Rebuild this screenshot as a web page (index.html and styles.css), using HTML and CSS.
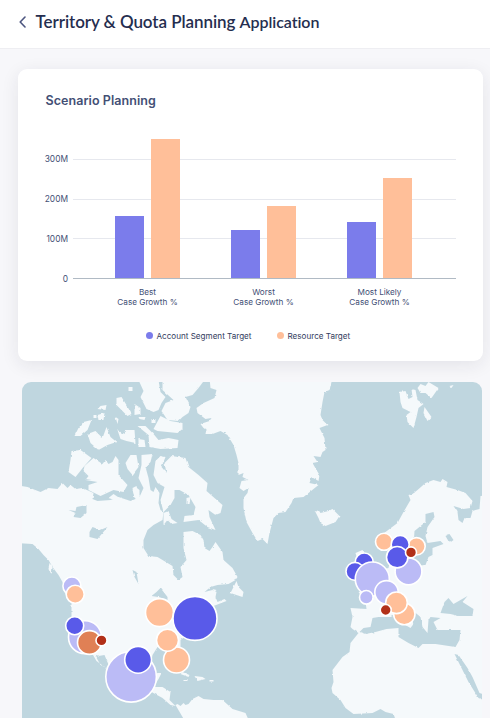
FILE: index.html
```html
<!DOCTYPE html>
<html lang="en">
<head>
    <meta charset="UTF-8">
    <meta name="viewport" content="width=device-width, initial-scale=1.0">
    <title>Territory &amp; Quota Planning Application</title>
    <link rel="stylesheet" href="styles.css">
</head>
<body>
    <header class="topbar">
        <svg class="back" viewBox="0 0 7 12"><path d="M6 1 1.2 6 6 11"/></svg>
        <h1>Territory &amp; Quota Planning <span>Application</span></h1>
    </header>
    <main>
        <section class="card">
            <h2>Scenario Planning</h2>
            <div class="chart">
                <div class="y-axis">
                    <span>300M</span>
                    <span>200M</span>
                    <span>100M</span>
                    <span>0</span>
                </div>
                <div class="plot">
                    <div class="group">
                        <div class="bar account" style="height: 62.5px"></div>
                        <div class="bar resource" style="height: 139.5px"></div>
                    </div>
                    <div class="group">
                        <div class="bar account" style="height: 48.5px"></div>
                        <div class="bar resource" style="height: 72.5px"></div>
                    </div>
                    <div class="group">
                        <div class="bar account" style="height: 56px"></div>
                        <div class="bar resource" style="height: 100px"></div>
                    </div>
                </div>
                <div class="x-axis">
                    <span>Best<br>Case Growth %</span>
                    <span>Worst<br>Case Growth %</span>
                    <span>Most Likely<br>Case Growth %</span>
                </div>
            </div>
            <div class="legend">
                <span><i class="dot account"></i>Account Segment Target</span>
                <span><i class="dot resource"></i>Resource Target</span>
            </div>
        </section>
        <svg class="map" viewBox="21.5 382 460.5 336">
            <defs>
                <filter id="coast" filterUnits="userSpaceOnUse" x="10" y="370" width="490" height="360">
                    <feTurbulence type="fractalNoise" baseFrequency="0.22" numOctaves="2" seed="4"/>
                    <feDisplacementMap in="SourceGraphic" scale="2.2" xChannelSelector="R" yChannelSelector="G"/>
                </filter>
            </defs>
            <g filter="url(#coast)">
                <g class="land">
                    <!-- north america -->
                    <path d="M15 485 27 487 40 492 48 488 57 489 62 483 67 488 70 485 75 489 82 488 93 493 92 499 97 501 110 500 118 497 130 501 135 499 132 490 135 487 139 490 139 497 143 488 138 478 141 465 141 455 152 454 150 462 145 467 148 478 150 490 153 492 155 487 159 493 158 503 160 510 163 512 162 520 153 525 147 530 143 540 143 548 148 556 157 557 167 563 172 566 173 575 178 580 182 577 180 567 186 560 183 548 183 532 192 531 200 535 203 540 204 548 209 551 212 547 215 542 222 552 223 560 232 568 237 577 235 580 228 584 217 585 210 587 204 592 212 590 216 592 215 597 217 602 224 599 226 601 213 606 204 616 196 628 184 637 180 640 180 650 184 664 180 668 172 652 157 647 152 655 150 665 150 677 157 673 161 673 158 679 153 687 162 687 170 692 169 700 175 706 170 705 162 698 151 692 140 695 122 693 108 680 107 673 100 657 95 656 100 665 104 667 96 661 92 654 82 650 70 633 71 617 71 603 65 593 62 582 58 575 52 567 48 560 43 555 38 549 32 544 15 543Z"/>
                    <path d="M175 705 177 704 180 706 183 703 185 705 188 704 192 699 198 696 203 699 213 700 222 700 232 709 245 713 249 722 185 722Z"/>
                    <path d="M49 563 52 567 51 575 48 568Z M236 581 238 587 243 592 242 597 236 595 230 593Z M212 589 216 590 214 592Z M194 676 202 677 205 679 197 681Z M182 672 189 675 188 677 180 674Z M209 680h4v1.500h-4Z M183 680h4v1h-4Z"/>
                    <!-- arctic islands -->
                    <path d="M71 451 80 450 91 458 83 467 75 477 68 472 70 460Z"/>
                    <path d="M93 458 102 464 105 460 108 464 112 462 115 456 118 460 118 475 127 485 123 492 113 490 100 496 88 490 88 485 97 482 85 480 88 476 83 471 84 466Z"/>
                    <path d="M125 463 130 455 136 455 138 467 132 475 127 469Z M108 498 113 494 119 498 117 501Z M132 488 136 486 138 494 134 498Z"/>
                    <path d="M87 434 95 431 102 438 106 427 110 437 116 442 107 445 98 450 90 443Z M74 436 78 428 83 422 91 420 87 430 80 436Z"/>
                    <path d="M97 409 100 406 106 405 105 410Z M97 415 104 413 103 420 98 420Z M93 415h3v3h-3Z M116 398 121 397 126 405 131 414 127 416 116 405Z M134 404 140 408 140 414 134 415Z M128 387h4v4h-4Z M115 417 118 419 117 424Z"/>
                    <path d="M117 430 123 434 125 430 134 430 135 443 126 441 120 439Z M138 439 144 440 145 447 138 447Z M138 417 145 417 144 420 139 419Z M151 419h4v4h-4Z"/>
                    <path d="M138 380 158 380 160 392 165 397 161 403 158 410 153 412 146 409 140 397 143 391Z"/>
                    <path d="M162 380 204 380 198 388 192 395 185 397 190 407 188 413 182 417 178 421 167 420 161 411 165 403 173 400 162 390Z"/>
                    <path d="M153 429 160 416 170 421 182 423 182 429 177 433 157 431Z M137 426 145 426 153 434 158 440 168 438 178 440 177 448 160 449 149 447 148 435Z"/>
                    <path d="M153 475 155 461 160 456 165 457 161 467 166 473 164 463 171 456 185 458 188 467 198 475 207 483 206 491 222 505 220 513 215 515 208 510 209 517 215 530 207 527 198 520 183 522 184 516 193 515 195 507 188 495 179 490 174 490 174 498 170 505 163 512 160 500 164 487 157 483Z"/>
                    <path d="M186 498 190 497 189 504 186 504Z M163 513 168 511 171 519 177 523 171 524 167 520 163 525Z"/>
                    <!-- greenland and iceland -->
                    <path d="M209 378 210 388 216 390 214 398 203 403 196 408 197 413 205 419 211 418 209 421 200 424 203 428 206 429 205 434 212 434 220 431 227 435 233 445 236 455 238 463 238 475 243 473 242 477 248 480 241 481 239 488 243 491 248 488 247 493 243 498 243 508 246 522 252 533 257 541 262 539 267 544 269 533 273 518 278 513 285 512 291 503 293 498 303 497 318 485 309 483 311 477 318 481 319 475 316 470 312 463 317 462 313 456 320 457 322 452 325 450 324 438 319 428 327 425 322 420 320 415 322 402 324 392 329 390 332 378Z"/>
                    <path d="M315 512 318 510 320 513 328 511 332 509 339 516 335 522 325 526 320 523 318 518Z"/>
                    <!-- svalbard -->
                    <path d="M399 392 405 391 408 399 412 397 411 389 415 390 417 400 423 404 418 408 416 417 413 428 407 422 406 415 410 412 402 408 400 402Z M424 407 431 417 427 421 423 413Z M417 388 420 384 425 386 428 382 438 388 431 398 425 393 420 393Z M449 386 453 385 451 388Z"/>
                    <!-- europe and africa -->
                    <path d="M381 535 397 523 403 512 410 500 408 495 412 494 417 490 425 483 433 480 440 482 442 479 447 482 446 487 457 490 465 493 472 501 470 508 463 509 453 506 457 512 458 520 462 523 464 518 470 518 472 511 475 510 479 509 480 496 490 495 490 725 397 725 393 714 385 712 380 709 372 713 353 714 345 708 340 700 332 693 331 688 333 682 332 670 342 657 349 652 350 643 358 633 352 629 350 627 352 617 350 608 366 609 365 602 358 592 374 590 380 570 388 568 391 555 394 549 380 548Z"/>
                    <path d="M355 553 362 550 366 557 374 568 377 577 365 581 366 565 359 567Z M347 567 355 563 357 577 348 578Z"/>
                </g>
                <g class="water">
                    <path d="M68 510 75 511 76 507 86 505 86 513 80 518 73 517 75 513Z M89 532 92 527 100 530 107 527 102 533 97 539 89 537Z M132 570 136 572 138 584 134 577Z M151 596 156 592 160 588 167 597 167 600 158 597Z M98 656 104 655 109 667 106 670Z"/>
                    <path d="M359 632 363 628 370 627 372 618 378 617 390 617 397 614 403 624 410 628 413 624 410 615 414 612 420 617 422 627 427 633 428 620 430 617 440 618 433 622 437 630 448 630 460 630 459 640 455 647 435 644 422 644 418 648 408 643 398 637 398 628 386 629 375 632 365 634Z"/>
                    <path d="M440 613 444 602 448 598 453 604 467 596 462 602 473 609 472 616 458 616 450 614Z M454 654 458 655 467 668 472 677 479 693 485 695 485 701 478 698 468 682 462 670Z"/>
                    <path d="M425 514 433 512 434 517 427 527 425 536 427 543 440 541 443 544 432 548 432 555 428 557 425 565 405 567 392 562 394 552 408 554 413 546 414 531 425 522Z M445 536 449 534 453 540 449 543Z"/>
                </g>
            </g>
            <g class="bubbles">
                <circle class="lavender" cx="71.400" cy="586" r="9"/>
                <circle class="peach" cx="74.700" cy="594.200" r="9"/>
                <circle class="lavender" cx="84.500" cy="637.200" r="16.500"/>
                <circle class="indigo" cx="74.200" cy="625.800" r="9"/>
                <circle class="orange" cx="88.900" cy="642.500" r="11.900"/>
                <circle class="red" cx="101" cy="640.400" r="5.500"/>
                <circle class="lavender" cx="130.600" cy="676.800" r="25.300"/>
                <circle class="indigo" cx="137.600" cy="659.800" r="13.400"/>
                <circle class="peach" cx="159" cy="612.600" r="14"/>
                <circle class="indigo" cx="194.500" cy="618.400" r="22"/>
                <circle class="peach" cx="176" cy="660" r="13"/>
                <circle class="peach" cx="167" cy="640.200" r="11"/>
                <circle class="peach" cx="383.500" cy="541.800" r="8.500"/>
                <circle class="peach" cx="416" cy="546.300" r="8.700"/>
                <circle class="indigo" cx="399.700" cy="544.500" r="9"/>
                <circle class="lavender" cx="408" cy="571.400" r="13.400"/>
                <circle class="indigo" cx="396.700" cy="557.200" r="10.700"/>
                <circle class="red" cx="410.500" cy="552.400" r="5.500"/>
                <circle class="indigo" cx="363.700" cy="562" r="9"/>
                <circle class="indigo" cx="354.500" cy="571.400" r="9"/>
                <circle class="lavender" cx="371.800" cy="579" r="17"/>
                <circle class="lavender" cx="365.800" cy="597.300" r="6.800"/>
                <circle class="lavender" cx="386" cy="592.300" r="11.700"/>
                <circle class="peach" cx="403.800" cy="614" r="10.700"/>
                <circle class="peach" cx="396" cy="602.800" r="10.800"/>
                <circle class="red" cx="385.200" cy="610" r="5.500"/>
            </g>
        </svg>
    </main>
</body>
</html>
```

FILE: styles.css
```css
* {
    box-sizing: border-box;
}
body {
    margin: 0;
    height: 718px;
    overflow: hidden;
    background-color: #f7f7fa;
    font-family: Inter, "Liberation Sans", sans-serif;
    color: #434f75;
}
.topbar {
    height: 49px;
    padding: 0 0 5px 19px;
    display: flex;
    align-items: center;
    gap: 9.5px;
    background-color: #fff;
    border-bottom: 1px solid #eeeef2;
}
.back {
    width: 7px;
    height: 12px;
    fill: none;
    stroke: #4d5680;
    stroke-width: 1.6;
    stroke-linecap: round;
    stroke-linejoin: round;
}
h1 {
    margin: 0;
    font: 600 17px/24px Lato, sans-serif;
    letter-spacing: -0.06px;
    color: #252e4f;
    white-space: nowrap;
}
h1 span {
    font-size: 16px;
}
main {
    padding: 20px 7px 0 18px;
}
.card {
    height: 292px;
    padding: 23px 27px 0 22px;
    border-radius: 9px;
    background-color: #fff;
    box-shadow: 0 4px 18px rgba(30, 30, 60, 0.09);
}
h2 {
    margin: 0 0 28px 5.5px;
    font-size: 12.5px;
    line-height: 18px;
    font-weight: 600;
    letter-spacing: 0.06px;
}
.chart {
    display: grid;
    grid-template-columns: 28px 383px;
    column-gap: 5px;
    font-size: 8.2px;
    line-height: 10px;
}
.y-axis {
    height: 141px;
    padding-top: 15.5px;
    display: flex;
    flex-direction: column;
    gap: 30px;
    font-size: 8.4px;
    text-align: right;
}
.plot {
    height: 141px;
    padding: 0 18.5px 0 16.5px;
    display: grid;
    grid-template-columns: repeat(3, 116px);
    border-bottom: 1px solid #b0bac4;
    background-image: linear-gradient(#e6e8ee, #e6e8ee), linear-gradient(#e6e8ee, #e6e8ee), linear-gradient(#e6e8ee, #e6e8ee);
    background-size: 100% 1px;
    background-position: 0 21px, 0 61px, 0 100px;
    background-repeat: no-repeat;
}
.group {
    display: flex;
    justify-content: center;
    align-items: flex-end;
    gap: 7.5px;
}
.bar {
    width: 28.5px;
}
.account {
    background-color: #7b7ceb;
}
.resource {
    background-color: #ffbf99;
}
.x-axis {
    grid-column: 2;
    padding: 8px 18px 0 16.5px;
    display: grid;
    grid-template-columns: repeat(3, 116px);
    text-align: center;
}
.legend {
    margin-top: 23.5px;
    padding-left: 105.5px;
    display: flex;
    gap: 25px;
    font-size: 8.1px;
    line-height: 10px;
    color: #333d5e;
}
.legend span {
    display: flex;
    align-items: center;
    white-space: nowrap;
}
.dot {
    width: 7px;
    height: 7px;
    margin-right: 4px;
    border-radius: 50%;
}
.map {
    display: block;
    width: 460.5px;
    height: 336px;
    margin: 21px 0 0 3.5px;
    border-radius: 9px 9px 0 0;
    background-color: #bfd6df;
}
.land {
    fill: #f5f9fb;
}
.water {
    fill: #bfd6df;
}
.bubbles circle {
    stroke: #fff;
    stroke-width: 1.6;
}
.lavender {
    fill: #bbbbf6;
}
.indigo {
    fill: #595ae9;
}
.peach {
    fill: #ffbf99;
}
.orange {
    fill: #e08055;
}
.red {
    fill: #b23018;
}
```
